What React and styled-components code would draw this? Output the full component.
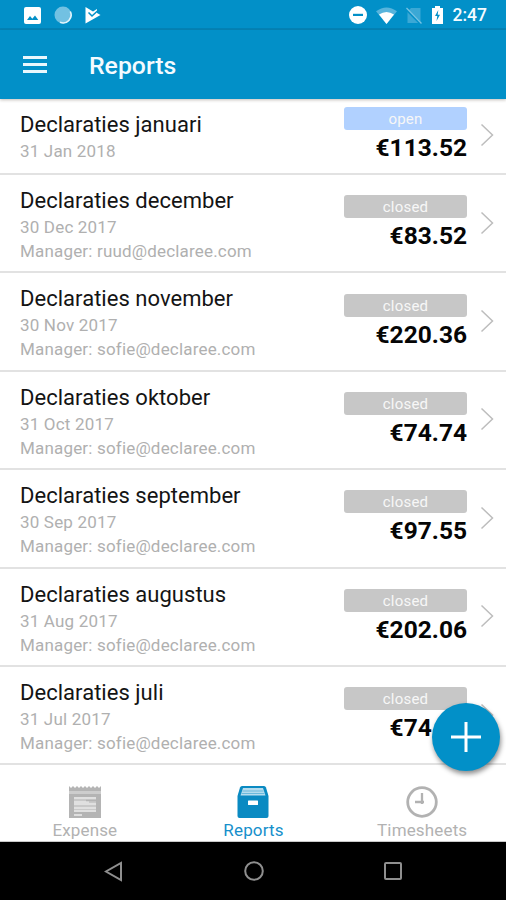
import React from 'react';
import styled, { createGlobalStyle } from 'styled-components';

const GlobalStyle = createGlobalStyle`
  * {
    box-sizing: border-box;
  }

  body {
    margin: 0;
    background-color: #ffffff;
    font-family: Roboto, 'Liberation Sans', sans-serif;
  }
`;

const Screen = styled.div`
  position: relative;
  display: flex;
  flex-direction: column;
  width: 506px;
  height: 900px;
  overflow: hidden;
  background-color: #ffffff;
`;

const StatusBar = styled.div`
  display: flex;
  flex: none;
  justify-content: space-between;
  align-items: center;
  height: 30px;
  padding: 2px 19px 0 24px;
  background-color: #0290c8;
  border-bottom: 2px solid #0384b8;
`;

const StatusGroup = styled.div`
  display: flex;
  align-items: center;
  gap: ${(props) => props.$gap};
`;

const Clock = styled.span`
  margin-left: 1px;
  color: #f4fbff;
  font-size: 17.5px;
  font-weight: 500;
  line-height: 22px;
`;

const Header = styled.header`
  position: relative;
  display: flex;
  flex: none;
  align-items: center;
  gap: 42px;
  height: 69px;
  padding: 3px 23px 0;
  background-color: #0290c8;
  box-shadow: 0 1px 3px rgba(60, 40, 20, 0.3);
`;

const Burger = styled.div`
  display: flex;
  flex-direction: column;
  gap: 4px;
  width: 24px;
  margin-bottom: 4px;

  span {
    height: 3px;
    background-color: #e9f7fd;
  }
`;

const Title = styled.h1`
  margin: 0;
  color: #f4fbff;
  font-size: 24.8px;
  font-weight: 500;
  line-height: 30px;
`;

const List = styled.main`
  flex: none;
  height: 667px;
  padding-top: 1px;
`;

const Row = styled.div`
  display: flex;
  align-items: center;
  height: ${(props) => (props.$short ? '75px' : '98.4px')};
  padding: ${(props) => (props.$short ? '0 12px 4px 20px' : '0 12px 1px 20px')};
  border-bottom: 2px solid #e2e2e2;
`;

const Info = styled.div`
  flex: 1;
  align-self: flex-start;
  padding-top: ${(props) => (props.$short ? '11px' : '12px')};
`;

const Name = styled.div`
  color: #141414;
  font-size: 22px;
  line-height: 28px;
  letter-spacing: 0.03px;
`;

const Detail = styled.div`
  color: #b0b0b0;
  font-size: 17px;
  line-height: 24px;
  letter-spacing: 0.18px;
`;

const Summary = styled.div`
  display: flex;
  flex-direction: column;
  align-items: flex-end;
  width: 123px;
  margin-right: 13px;
`;

const Badge = styled.div`
  width: 100%;
  height: 23px;
  border-radius: 3px;
  background-color: ${(props) => (props.$open ? '#b1d1ff' : '#c7c7c7')};
  color: #f7f7f7;
  font-size: 15px;
  line-height: 24px;
  letter-spacing: 0.2px;
  text-align: center;
`;

const Amount = styled.div`
  height: 32px;
  color: #050505;
  font-size: 24.5px;
  font-weight: 700;
  line-height: 35px;
`;

const TabBar = styled.nav`
  display: grid;
  flex: none;
  grid-template-columns: repeat(3, 1fr);
  height: 76px;
  border-bottom: 1px solid #c9c9c9;
`;

const Tab = styled.div`
  display: flex;
  flex-direction: column;
  align-items: center;
  padding: 20px 0 0 1px;
  color: ${(props) => (props.$active ? '#168fcb' : '#b2b2b2')};
  font-size: 17px;
  line-height: 24px;
  letter-spacing: 0.15px;
`;

const SystemBar = styled.div`
  display: flex;
  flex: 1;
  justify-content: space-between;
  align-items: center;
  padding: 0 104px;
  background-color: #000000;
`;

const AddButton = styled.button`
  position: absolute;
  right: 6px;
  bottom: 129px;
  display: flex;
  align-items: center;
  justify-content: center;
  width: 68px;
  height: 68px;
  padding: 0;
  border: 0;
  border-radius: 50%;
  background-color: #0290c8;
  box-shadow: 1px 3px 5px rgba(0, 0, 0, 0.45);
`;

const ImageIcon = () => (
  <svg width="17" height="17" viewBox="0 0 17 17">
    <rect width="17" height="17" rx="2" fill="#fff" />
    <path d="M3 13l3-4 2.300 2.700L11 8.500l3.300 4.500z" fill="#0290c8" />
  </svg>
);

const SyncIcon = () => (
  <svg width="18" height="18" viewBox="0 0 18 18">
    <circle cx="9" cy="9" r="8.500" fill="#72c1e2" />
    <path d="M16.300 5.500A8 8 0 0 1 6 16.300" fill="none" stroke="#e2f4fb" strokeWidth="1.600" />
  </svg>
);

const PlayCheckIcon = () => (
  <svg width="16" height="18" viewBox="0 0 16 18">
    <path d="M0.500 1l5 3L8 5.500 12 3v4l3.500 2L0.500 17.500z" fill="#fff" />
    <path d="M3.500 6.500l3.500 3.500L13.500 4" fill="none" stroke="#0290c8" strokeWidth="1.500" />
  </svg>
);

const DndIcon = () => (
  <svg width="18" height="18" viewBox="0 0 18 18">
    <circle cx="9" cy="9" r="9" fill="#fff" />
    <rect x="4" y="7.800" width="10" height="2.200" fill="#0290c8" />
  </svg>
);

const WifiIcon = () => (
  <svg width="21" height="17" viewBox="0 0 21 17">
    <path d="M0 4.300Q10.500-3.500 21 4.300L10.500 17z" fill="#58b4dc" />
    <path d="M3 7.500Q10.500 2.400 18 7.500L10.500 17z" fill="#fff" />
  </svg>
);

const NoSimIcon = () => (
  <svg width="17" height="17" viewBox="0 0 17 17">
    <path d="M5 1h9.500v15H1.500V4.500z" fill="#3ba8d5" />
    <path d="M0 2l15 15" stroke="#0290c8" strokeWidth="2.600" />
    <path d="M0.500 1l15 15.500" stroke="#78c3e3" strokeWidth="1.300" />
  </svg>
);

const BatteryIcon = () => (
  <svg width="11" height="18" viewBox="0 0 11 18">
    <path d="M3 0h5v2h3v16H0V2h3z" fill="#fff" />
    <path d="M6.300 4L3 10h2.300l-.8 5L8 8.800H5.700z" fill="#0290c8" />
  </svg>
);

const Chevron = () => (
  <svg width="14" height="24" viewBox="0 0 14 24">
    <path d="M1.500 1.500L12.500 12L1.500 22.500" fill="none" stroke="#bdbdbd" strokeWidth="1.500" />
  </svg>
);

const PlusIcon = () => (
  <svg width="30" height="30" viewBox="0 0 30 30">
    <path d="M15 0v30M0 15h30" stroke="#fff" strokeWidth="3" />
  </svg>
);

const ExpenseIcon = () => (
  <svg width="32" height="32" viewBox="0 0 32 32">
    <path
      d="M0 0l2 2 2-2 2 2 2-2 2 2 2-2 2 2 2-2 2 2 2-2 2 2 2-2 2 2 2-2 2 2 2-2v5H0z"
      fill="#b4b4b4"
    />
    <path d="M0 5h32v3H0z" fill="#cdcdcd" />
    <path d="M0 8h32v24H0z" fill="#b4b4b4" />
    <path d="M5 11h22v2H5zM5 15h15v2H5zM5 17h22v2H5zM5 21h22v2H5zM5 24h22v2H5zM5 28h8v2H5z" fill="#dedede" />
    <path d="M5 11h22v15H5z" fill="#e2e2e2" opacity="0.45" />
    <path d="M17 14.500h10" stroke="#b4b4b4" strokeWidth="1.500" />
  </svg>
);

const ReportsIcon = () => (
  <svg width="32" height="32" viewBox="0 0 32 32">
    <path d="M5 0h22q1.500 0 2 1.500L31.500 10v20q0 2-2 2h-27q-2 0-2-2V10L3 1.500Q3.500 0 5 0z" fill="#0a8ac2" />
    <path d="M6 2h20l2.500 7.500h-25z" fill="#b5dcee" />
    <path d="M5.500 5h21M4.500 7.500h23" stroke="#6ab9dc" strokeWidth="1" />
    <rect x="11" y="14.500" width="10" height="4.500" rx="0.500" fill="#fff" />
  </svg>
);

const ClockIcon = () => (
  <svg width="32" height="32" viewBox="0 0 32 32">
    <circle cx="16" cy="16" r="14.300" fill="none" stroke="#b2b2b2" strokeWidth="2.800" />
    <path d="M16 7v11M9 16h9" fill="none" stroke="#b2b2b2" strokeWidth="2.300" />
  </svg>
);

const BackIcon = () => (
  <svg width="19" height="21" viewBox="0 0 19 21">
    <path d="M17 2v17L2 10.500z" fill="none" stroke="#8f8f8f" strokeWidth="2" />
  </svg>
);

const HomeIcon = () => (
  <svg width="20" height="20" viewBox="0 0 20 20">
    <circle cx="10" cy="10" r="8.800" fill="none" stroke="#8f8f8f" strokeWidth="2" />
  </svg>
);

const RecentIcon = () => (
  <svg width="18" height="18" viewBox="0 0 18 18">
    <rect x="1" y="1" width="16" height="16" rx="1" fill="none" stroke="#8f8f8f" strokeWidth="2" />
  </svg>
);

const reports = [
  { name: 'Declaraties januari', date: '31 Jan 2018', status: 'open', amount: '€113.52' },
  { name: 'Declaraties december', date: '30 Dec 2017', manager: 'ruud@declaree.com', status: 'closed', amount: '€83.52' },
  { name: 'Declaraties november', date: '30 Nov 2017', manager: 'sofie@declaree.com', status: 'closed', amount: '€220.36' },
  { name: 'Declaraties oktober', date: '31 Oct 2017', manager: 'sofie@declaree.com', status: 'closed', amount: '€74.74' },
  { name: 'Declaraties september', date: '30 Sep 2017', manager: 'sofie@declaree.com', status: 'closed', amount: '€97.55' },
  { name: 'Declaraties augustus', date: '31 Aug 2017', manager: 'sofie@declaree.com', status: 'closed', amount: '€202.06' },
  { name: 'Declaraties juli', date: '31 Jul 2017', manager: 'sofie@declaree.com', status: 'closed', amount: '€74.00' },
];

const ReportRow = ({ report }) => (
  <Row $short={!report.manager}>
    <Info $short={!report.manager}>
      <Name>{report.name}</Name>
      <Detail>{report.date}</Detail>
      {report.manager && <Detail>Manager: {report.manager}</Detail>}
    </Info>
    <Summary>
      <Badge $open={report.status === 'open'}>{report.status}</Badge>
      <Amount>{report.amount}</Amount>
    </Summary>
    <Chevron />
  </Row>
);

const App = () => (
  <>
    <GlobalStyle />
    <Screen>
      <StatusBar>
        <StatusGroup $gap="13px">
          <ImageIcon />
          <SyncIcon />
          <PlayCheckIcon />
        </StatusGroup>
        <StatusGroup $gap="9px">
          <DndIcon />
          <WifiIcon />
          <NoSimIcon />
          <BatteryIcon />
          <Clock>2:47</Clock>
        </StatusGroup>
      </StatusBar>
      <Header>
        <Burger>
          <span />
          <span />
          <span />
        </Burger>
        <Title>Reports</Title>
      </Header>
      <List>
        {reports.map((report) => (
          <ReportRow key={report.name} report={report} />
        ))}
      </List>
      <TabBar>
        <Tab>
          <ExpenseIcon />
          Expense
        </Tab>
        <Tab $active>
          <ReportsIcon />
          Reports
        </Tab>
        <Tab>
          <ClockIcon />
          Timesheets
        </Tab>
      </TabBar>
      <SystemBar>
        <BackIcon />
        <HomeIcon />
        <RecentIcon />
      </SystemBar>
      <AddButton aria-label="Add report">
        <PlusIcon />
      </AddButton>
    </Screen>
  </>
);

export default App;
